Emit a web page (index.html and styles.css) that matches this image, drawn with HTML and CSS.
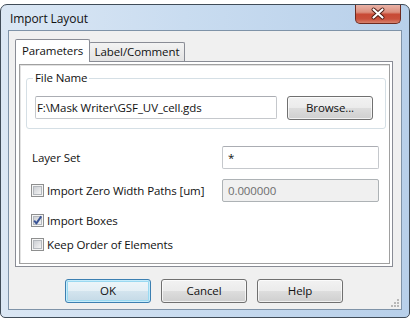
FILE: index.html
```html
<!DOCTYPE html>
<html>
<head>
<meta charset="utf-8">
<link rel="stylesheet" href="styles.css">
</head>
<body>
<div class="window">
  <div class="titlebar">
    <span class="title">Import Layout</span>
    <div class="close">
      <svg width="46" height="19" viewBox="0 0 46 19">
        <path d="M18.5 5.5 L27.5 13.5 M27.5 5.5 L18.5 13.5" stroke="#4b1a12" stroke-width="4" stroke-linecap="round"/>
        <path d="M18.5 5.5 L27.5 13.5 M27.5 5.5 L18.5 13.5" stroke="#ffffff" stroke-width="2.2" stroke-linecap="round"/>
      </svg>
    </div>
  </div>
  <div class="client">
    <div class="tabs">
      <div class="tab active">Parameters</div>
      <div class="tab">Label/Comment</div>
    </div>
    <div class="panel">
      <div class="page">
        <fieldset class="group">
          <legend>File Name</legend>
          <div class="file-row">
            <div class="edit file">F:\Mask Writer\GSF_UV_cell.gds</div>
            <div class="btn browse">Browse...</div>
          </div>
        </fieldset>
        <div class="form">
          <div class="row r-layer">
            <span class="label">Layer Set</span>
            <div class="edit value">*</div>
          </div>
          <div class="row r-zero">
            <span class="check">
              <svg class="box" width="13" height="13" viewBox="0 0 13 13">
                <defs><linearGradient id="g1" x1="0" y1="0" x2="1" y2="1"><stop offset="0" stop-color="#c9ccd1"/><stop offset="1" stop-color="#f6f6f6"/></linearGradient></defs>
                <rect x="0.5" y="0.5" width="12" height="12" fill="#f5f5f5" stroke="#8e8f8f"/>
                <rect x="2.5" y="2.5" width="8" height="8" fill="url(#g1)" stroke="#b4b8bd"/>
              </svg>
              Import Zero Width Paths [um]
            </span>
            <div class="edit value disabled">0.000000</div>
          </div>
          <div class="row r-boxes">
            <span class="check">
              <svg class="box" width="13" height="13" viewBox="0 0 13 13">
                <defs><linearGradient id="g2" x1="0" y1="0" x2="1" y2="1"><stop offset="0" stop-color="#c9ccd1"/><stop offset="1" stop-color="#f6f6f6"/></linearGradient></defs>
                <rect x="0.5" y="0.5" width="12" height="12" fill="#f5f5f5" stroke="#8e8f8f"/>
                <rect x="2.5" y="2.5" width="8" height="8" fill="url(#g2)" stroke="#b4b8bd"/>
                <path d="M3.2 6.6 L5.4 9.4 L10.2 2.4" fill="none" stroke="#3a5496" stroke-width="1.9" stroke-linejoin="round"/>
              </svg>
              Import Boxes
            </span>
          </div>
          <div class="row r-order">
            <span class="check">
              <svg class="box" width="13" height="13" viewBox="0 0 13 13">
                <defs><linearGradient id="g3" x1="0" y1="0" x2="1" y2="1"><stop offset="0" stop-color="#c9ccd1"/><stop offset="1" stop-color="#f6f6f6"/></linearGradient></defs>
                <rect x="0.5" y="0.5" width="12" height="12" fill="#f5f5f5" stroke="#8e8f8f"/>
                <rect x="2.5" y="2.5" width="8" height="8" fill="url(#g3)" stroke="#b4b8bd"/>
              </svg>
              Keep Order of Elements
            </span>
          </div>
        </div>
      </div>
    </div>
    <div class="buttons">
      <div class="btn default">OK</div>
      <div class="btn">Cancel</div>
      <div class="btn">Help</div>
    </div>
    <svg class="grip" width="10" height="10" viewBox="0 0 10 10">
      <g fill="#b8b8b8">
        <rect x="7" y="1" width="2" height="2"/>
        <rect x="4" y="4" width="2" height="2"/><rect x="7" y="4" width="2" height="2"/>
        <rect x="1" y="7" width="2" height="2"/><rect x="4" y="7" width="2" height="2"/><rect x="7" y="7" width="2" height="2"/>
      </g>
    </svg>
  </div>
</div>
</body>
</html>
```

FILE: styles.css
```css
html, body {
  margin: 0;
  padding: 0;
  background: #ffffff;
}
body {
  font-family: "Open Sans", "Noto Sans", sans-serif;
  font-size: 11.5px;
  letter-spacing: -0.1px;
  color: #111;
}
.window {
  margin-top: 4px;
  width: 410px;
  height: 314px;
  box-sizing: border-box;
  border: 1px solid #404c58;
  border-radius: 7px 7px 5px 5px;
  padding: 0 7px 7px 7px;
  display: flex;
  flex-direction: column;
  background: linear-gradient(to right, #dbe7f4 0%, #c9dcf0 45%, #b8d0ea 100%);
}
.titlebar {
  height: 25px;
  display: flex;
  align-items: flex-start;
}
.title {
  margin: 6px 0 0 2px;
  font-size: 12px;
  line-height: 16px;
}
.close {
  margin-left: auto;
  margin-right: 1px;
  width: 46px;
  height: 19px;
  box-sizing: border-box;
  border: 1px solid #6e2b20;
  border-top: none;
  border-radius: 0 0 5px 5px;
  background: linear-gradient(#e9b2a6 0%, #dc8f7d 40%, #c84a35 52%, #c9503b 78%, #d7836f 100%);
}
.close svg { display: block; margin: -1px 0 0 -1px; }
.client {
  flex: 1;
  position: relative;
  border: 1px solid #7f93a8;
  background: #f0f0f0;
  padding: 8px 8px 0 6px;
  display: flex;
  flex-direction: column;
}
.tabs {
  display: flex;
  align-items: flex-end;
  height: 22px;
}
.tab {
  box-sizing: border-box;
  height: 19px;
  border: 1px solid #898c95;
  border-bottom: none;
  border-radius: 2px 2px 0 0;
  background: linear-gradient(#f3f3f3, #e3e3e3);
  text-align: center;
  line-height: 18px;
  width: 96px;
  margin-left: -1px;
}
.tab.active {
  position: relative;
  z-index: 1;
  width: 75px;
  height: 23px;
  margin-left: 0;
  margin-bottom: -1px;
  background: #ffffff;
  line-height: 21px;
}
.panel {
  width: 378px;
  height: 206px;
  box-sizing: border-box;
  border: 1px solid #898c95;
  background: #ffffff;
  padding: 2px 2px 2px 3px;
}
.page {
  height: 100%;
  box-sizing: border-box;
  border: 1px solid #a0a0a0;
  box-shadow: inset 1px 1px 0 #e2e2e2;
  background: #ffffff;
}
.group {
  margin: 5px 3px 0 6px;
  padding: 10px 12px 8px 8px;
  border: 1px solid #d5dfe5;
  border-radius: 3px;
  min-width: 0;
}
.group legend {
  padding: 0 2px;
  margin-left: -2px;
  line-height: 16px;
}
.file-row {
  display: flex;
  align-items: flex-start;
  gap: 10px;
}
.edit {
  box-sizing: border-box;
  height: 23px;
  border: 1px solid #c5c8cc;
  border-top-color: #abadb3;
  border-radius: 2px;
  background: #ffffff;
  line-height: 21px;
  white-space: nowrap;
  overflow: hidden;
}
.edit.file {
  width: 242px;
  padding-left: 1px;
}
.btn {
  box-sizing: border-box;
  width: 86px;
  height: 24px;
  border: 1px solid #707070;
  border-radius: 3px;
  background: linear-gradient(#f2f2f2 0%, #ebebeb 50%, #dddddd 51%, #cfcfcf 100%);
  box-shadow: inset 0 0 0 1px rgba(255,255,255,0.7);
  text-align: center;
  line-height: 21px;
}
.btn.default {
  border-color: #3c7fb1;
  box-shadow: inset 0 0 0 1px #c6ecfb, inset 0 0 0 2px #9ad9f1;
  background: linear-gradient(#eef6fa 0%, #e4eff5 50%, #d3e4ee 51%, #c4d9e6 100%);
}
.form {
  margin: 17px 0 0 11px;
}
.row {
  display: grid;
  grid-template-columns: 191px 157px;
  align-items: center;
}
.r-layer { height: 23px; }
.r-zero { height: 23px; margin-top: 10px; }
.r-boxes { height: 15px; margin-top: 11px; }
.r-order { height: 15px; margin-top: 9px; }
.label { margin-left: 1px; }
.edit.value { padding-left: 5px; }
.edit.disabled {
  background: #f0f0f0;
  border-color: #adb2b5;
  color: #6d6d6d;
}
.check {
  display: flex;
  align-items: center;
  gap: 3px;
  white-space: nowrap;
}
.box { display: block; flex: none; }
.buttons {
  margin-top: 12px;
  display: flex;
  justify-content: center;
  gap: 10px;
}
.grip {
  position: absolute;
  right: 1px;
  bottom: 1px;
}
```
